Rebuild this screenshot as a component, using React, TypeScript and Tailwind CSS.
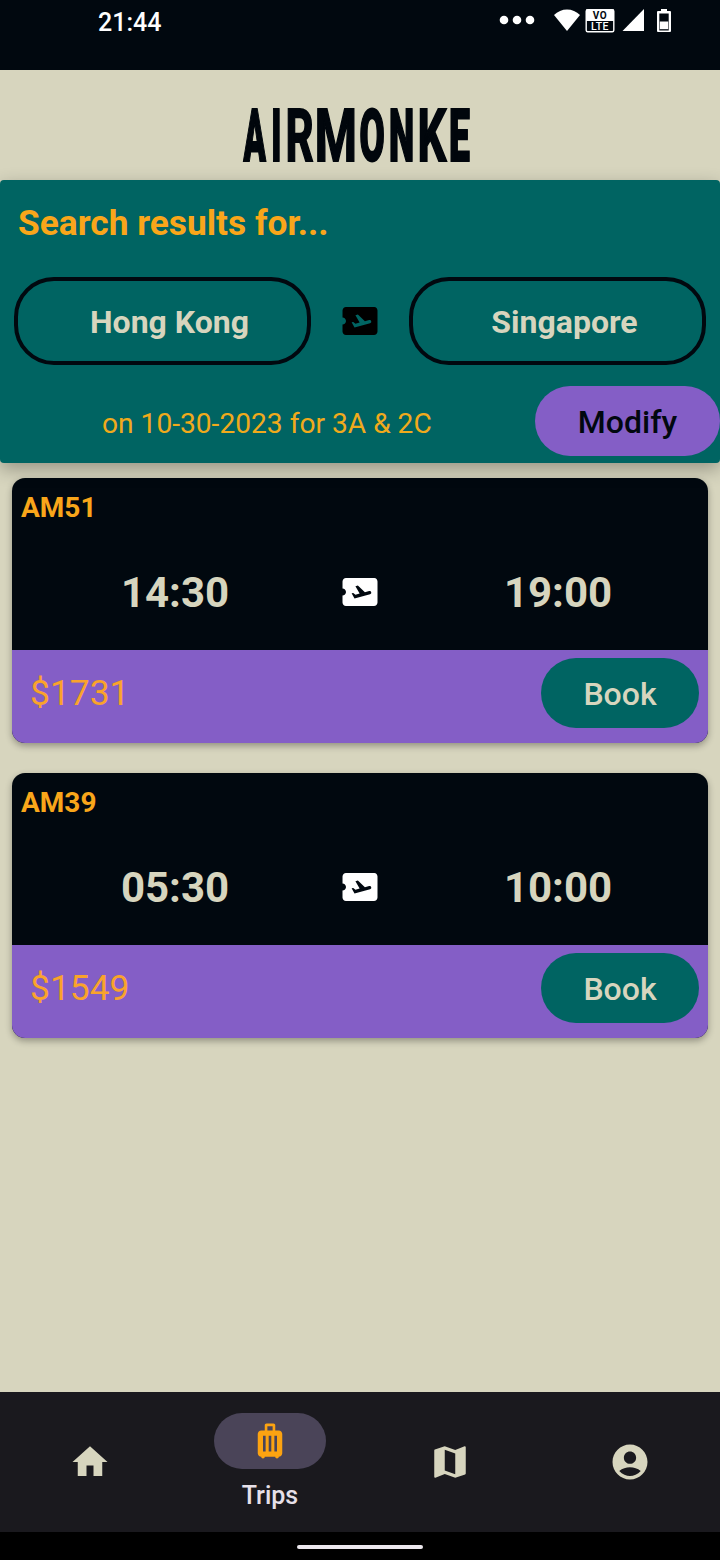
import { MdAccountCircle, MdAirplaneTicket, MdHome, MdLuggage, MdMap } from "react-icons/md";

type Flight = { code: string; departs: string; arrives: string; price: string };

const flights: Flight[] = [
  { code: "AM51", departs: "14:30", arrives: "19:00", price: "$1731" },
  { code: "AM39", departs: "05:30", arrives: "10:00", price: "$1549" },
];

function StatusBar() {
  return (
    <header className="flex h-[70px] shrink-0 items-start justify-between bg-[#01080f] pl-[98px] text-white">
      <span className="mt-[8px] text-[25px] leading-[30px] font-medium">21:44</span>
      <svg className="h-[40px] w-[230px]" viewBox="490 0 230 40" fill="currentColor">
        <circle cx="504" cy="20" r="4.3" />
        <circle cx="517" cy="20" r="4.3" />
        <circle cx="530" cy="20" r="4.3" />
        <path d="M554 15C561 7.500 573 7.500 580 15L567 31Z" />
        <rect x="586.2" y="9.700" width="27.600" height="22" rx="1.500" fill="none" stroke="currentColor" strokeWidth="1.400" />
        <rect x="586" y="9.500" width="28" height="11.500" />
        <text x="600" y="18.900" textAnchor="middle" fontSize="10" fontWeight="700" fill="#01080f" letterSpacing=".5">VO</text>
        <text x="600" y="30.200" textAnchor="middle" fontSize="10.500" fontWeight="500" letterSpacing=".4">LTE</text>
        <path d="M622.500 31L644 9V31Z" />
        <path fillRule="evenodd" d="M661 9h6v2h3q1 0 1 1v19q0 1-1 1h-12q-1 0-1-1V12q0-1 1-1h3zM659.300 13.500v17h9.400v-17z" />
        <rect x="659.800" y="21.500" width="8.400" height="7.700" />
      </svg>
    </header>
  );
}

// Each letter of the condensed wordmark: its origin, horizontal scale and weight.
const wordmark = [
  { letter: "A", x: 243.6, scale: 0.45, weight: 900 },
  { letter: "I", x: 271.3, scale: 0.46, weight: 900 },
  { letter: "R", x: 285.4, scale: 0.6, weight: 700 },
  { letter: "M", x: 314.8, scale: 0.66, weight: 700 },
  { letter: "O", x: 359.4, scale: 0.5, weight: 900 },
  { letter: "N", x: 389, scale: 0.49, weight: 900 },
  { letter: "K", x: 417.6, scale: 0.62, weight: 700 },
  { letter: "E", x: 449, scale: 0.51, weight: 900 },
];

function Logo() {
  return (
    <div className="flex h-[110px] shrink-0 justify-center">
      <svg className="h-[110px] w-[720px]" viewBox="0 0 720 110" fontSize="73" fill="#01060c" stroke="#01060c" strokeWidth="2">
        {wordmark.map(({ letter, x, scale, weight }) => (
          <text key={letter} transform={`translate(${x} 91) scale(${scale} 1)`} fontWeight={weight}>
            {letter}
          </text>
        ))}
      </svg>
    </div>
  );
}

function City({ name }: { name: string }) {
  return (
    <div className="flex h-[88px] w-[297px] items-center justify-center rounded-[40px] border-4 border-[#01080f] pl-[14px] text-[32px] font-bold text-[#d7d5be]">
      <span className="mt-[2px]">{name}</span>
    </div>
  );
}

function SearchSummary() {
  return (
    <section className="relative flex h-[283px] shrink-0 flex-col rounded-[4px] bg-[#006462] shadow-[0_6px_18px_rgba(0,0,0,0.3)]">
      <h1 className="mt-[21px] ml-[18px] text-[35.3px] leading-[44px] font-bold text-[#f9a61a]">Search results for...</h1>
      <div className="mt-[32px] flex items-center justify-between px-[14px]">
        <City name="Hong Kong" />
        <MdAirplaneTicket className="size-[42px] text-black" />
        <City name="Singapore" />
      </div>
      <div className="mt-[21px] flex h-[70px] items-center justify-between">
        <p className="mt-[6px] ml-[102px] text-[28.15px] text-[#f0aa1c]">on 10-30-2023 for 3A &amp; 2C</p>
        <button className="h-[70px] w-[185px] rounded-full bg-[#845ec6] pt-[2px] text-[32px] font-medium text-[#01080f]">
          Modify
        </button>
      </div>
    </section>
  );
}

function FlightCard({ flight }: { flight: Flight }) {
  return (
    <article className="flex h-[265px] flex-col overflow-hidden rounded-[13px] bg-[#01080f] shadow-[0_3px_7px_rgba(0,0,0,0.32)]">
      <div className="h-[172px]">
        <h2 className="pt-[13px] pl-[9px] text-[28px] leading-[34px] font-bold text-[#f9a61a]">{flight.code}</h2>
        <div className="mt-[42px] grid h-[50px] grid-cols-[282px_1fr_282px] items-center justify-items-center pr-[9px] pl-[22px] text-[42px] leading-[48px] font-bold text-[#d7d5be]">
          <span className="mt-[2px]">{flight.departs}</span>
          <MdAirplaneTicket className="mr-[13px] size-[42px] text-white" />
          <span className="mt-[2px]">{flight.arrives}</span>
        </div>
      </div>
      <div className="flex h-[93px] items-start justify-between bg-[#845ec6] pt-[8px] pr-[9px] pl-[18px]">
        <span className="mt-[13px] text-[35.4px] leading-[44px] text-[#f9a32b]">{flight.price}</span>
        <button className="h-[70px] w-[158px] rounded-full bg-[#006462] pt-[2px] text-[32px] font-medium text-[#d7d5be]">
          Book
        </button>
      </div>
    </article>
  );
}

function BottomNav() {
  return (
    <nav className="grid h-[140px] shrink-0 grid-cols-4 bg-[#1a191e] text-[#d7d5be]">
      <div className="flex items-center justify-center">
        <MdHome className="size-[42px]" />
      </div>
      <div className="flex flex-col items-center pt-[21px]">
        <div className="flex h-[56px] w-[112px] items-center justify-center rounded-full bg-[#4a4458] text-[#fca311]">
          <MdLuggage className="size-[42px]" />
        </div>
        <span className="mt-[12px] text-[25px] leading-[30px] font-medium text-[#e6e0e9]">Trips</span>
      </div>
      <div className="flex items-center justify-center">
        <MdMap className="size-[42px]" />
      </div>
      <div className="flex items-center justify-center">
        <MdAccountCircle className="size-[42px]" />
      </div>
    </nav>
  );
}

export default function App() {
  return (
    <div className="flex h-[1560px] w-[720px] flex-col overflow-hidden bg-[#d7d5be] font-['Roboto',sans-serif]">
      <StatusBar />
      <Logo />
      <SearchSummary />
      <main className="flex grow flex-col gap-[30px] px-[12px] pt-[15px]">
        {flights.map((flight) => (
          <FlightCard key={flight.code} flight={flight} />
        ))}
      </main>
      <BottomNav />
      <footer className="flex h-[28px] shrink-0 items-center justify-center bg-black pt-[2px]">
        <div className="h-[4px] w-[126px] rounded-full bg-[#ece8ee]" />
      </footer>
    </div>
  );
}
